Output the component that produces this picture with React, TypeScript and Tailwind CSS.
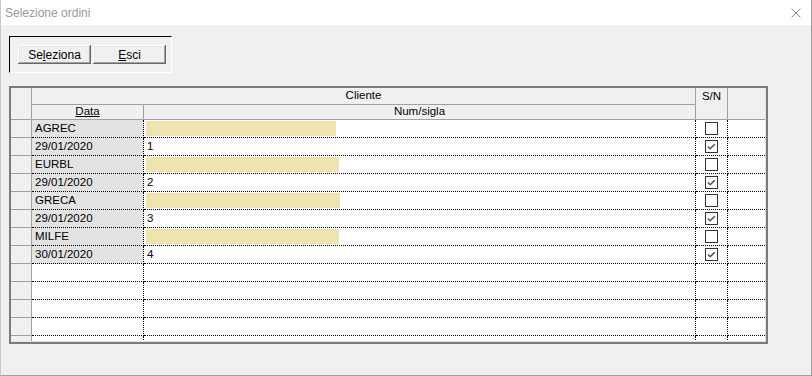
import React from "react";

type Row = { a: string; b?: string; y?: string; checked: boolean; filled: boolean };

const rows: Row[] = [
  { a: "AGREC", y: "w-[190px]", checked: false, filled: true },
  { a: "29/01/2020", b: "1", checked: true, filled: true },
  { a: "EURBL", y: "w-[193px]", checked: false, filled: true },
  { a: "29/01/2020", b: "2", checked: true, filled: true },
  { a: "GRECA", y: "w-[194px]", checked: false, filled: true },
  { a: "29/01/2020", b: "3", checked: true, filled: true },
  { a: "MILFE", y: "w-[193px]", checked: false, filled: true },
  { a: "30/01/2020", b: "4", checked: true, filled: true },
  { a: "", checked: false, filled: false },
  { a: "", checked: false, filled: false },
  { a: "", checked: false, filled: false },
  { a: "", checked: false, filled: false },
  { a: "", checked: false, filled: false },
];

function CheckBox({ checked }: { checked: boolean }) {
  return (
    <div className="w-[13px] h-[13px] border border-[#333333] bg-white flex items-center justify-center">
      {checked && (
        <svg width="11" height="11" viewBox="0 0 11 11">
          <path d="M2 5.5 L4.2 7.7 L8.8 3.2" fill="none" stroke="#555555" strokeWidth="1.6" />
        </svg>
      )}
    </div>
  );
}

function Btn({ children }: { children: React.ReactNode }) {
  return (
    <div className="w-[73px] h-[19px] bg-[#f0f0f0] flex items-center justify-center text-[12px] text-black shadow-[inset_-1px_-1px_#696969,inset_1px_1px_#ffffff,inset_-2px_-2px_#a0a0a0,inset_2px_2px_#e3e3e3]">
      {children}
    </div>
  );
}

export default function App() {
  return (
    <div className="w-[812px] h-[376px] bg-[#f0f0f0] flex flex-col border-l border-r border-b border-l-[#c8c8c8] border-r-[#a0a0a0] border-b-[#a0a0a0] font-['Liberation_Sans',Arial,sans-serif] overflow-hidden">
      {/* Title bar */}
      <div className="h-[25px] bg-white flex items-center justify-between shrink-0">
        <span className="pl-[4px] text-[12px] text-[#999999]">Selezione ordini</span>
        <svg width="10" height="10" viewBox="0 0 10 10" className="mr-[10px]">
          <path d="M0.5 0.5 L9.5 9.5 M9.5 0.5 L0.5 9.5" stroke="#8a8a8a" strokeWidth="1" />
        </svg>
      </div>

      {/* Button frame */}
      <div className="pl-[8px] pt-[11px]">
        <div className="w-[163px] h-[37px] border-t border-l border-t-black border-l-black border-r border-b border-r-white border-b-white flex items-start pl-[8px] pt-[8px] gap-[2px]">
          <Btn>
            <span>
              Se<span className="underline">l</span>eziona
            </span>
          </Btn>
          <Btn>
            <span>
              <span className="underline">E</span>sci
            </span>
          </Btn>
        </div>
      </div>

      {/* Grid */}
      <div className="ml-[8px] mt-[13px] w-[759px] h-[258px] border-2 border-[#7a7a7a] bg-white">
        <div className="w-full h-full border-r border-b border-[#e3e3e3] overflow-hidden text-[11.5px] text-black">
          {/* Header */}
          <div className="grid grid-cols-[21px_112px_552px_32px_1fr] grid-rows-[17px_15px] bg-[#f0f0f0]">
            <div className="row-span-2 border-r border-b border-[#a0a0a0]" />
            <div className="col-span-2 border-r border-b border-[#a0a0a0] flex items-center justify-center leading-none">
              Cliente
            </div>
            <div className="row-span-2 border-r border-b border-[#a0a0a0] flex justify-center pt-[3px] leading-none">
              S/N
            </div>
            <div className="row-span-2 border-b border-[#a0a0a0]" />
            <div className="border-r border-b border-[#a0a0a0] flex items-center justify-center leading-none">
              <span className="underline">Data</span>
            </div>
            <div className="border-r border-b border-[#a0a0a0] flex items-center justify-center leading-none">
              Num/sigla
            </div>
          </div>

          {/* Rows */}
          {rows.map((r, i) => (
            <div key={i} className="flex h-[18px]">
              <div className="w-[21px] shrink-0 bg-[#f0f0f0] border-r border-b border-[#a0a0a0]" />
              <div
                className={`w-[112px] shrink-0 border-r border-b border-dotted border-black flex items-center pl-[3px] ${
                  r.filled ? "bg-[#e3e3e3]" : "bg-white"
                }`}
              >
                {r.a}
              </div>
              <div className="w-[552px] shrink-0 border-r border-b border-dotted border-black">
                {r.y ? (
                  <div className={`${r.y} h-[15px] mt-[1px] ml-[2px] bg-[#efe4b0]`} />
                ) : (
                  <div className="h-full flex items-center pl-[3px]">{r.b}</div>
                )}
              </div>
              <div className="w-[32px] shrink-0 border-r border-b border-dotted border-black flex items-center justify-center">
                {r.filled && <CheckBox checked={r.checked} />}
              </div>
              <div className="flex-1 border-b border-dotted border-black" />
            </div>
          ))}
        </div>
      </div>
    </div>
  );
}
